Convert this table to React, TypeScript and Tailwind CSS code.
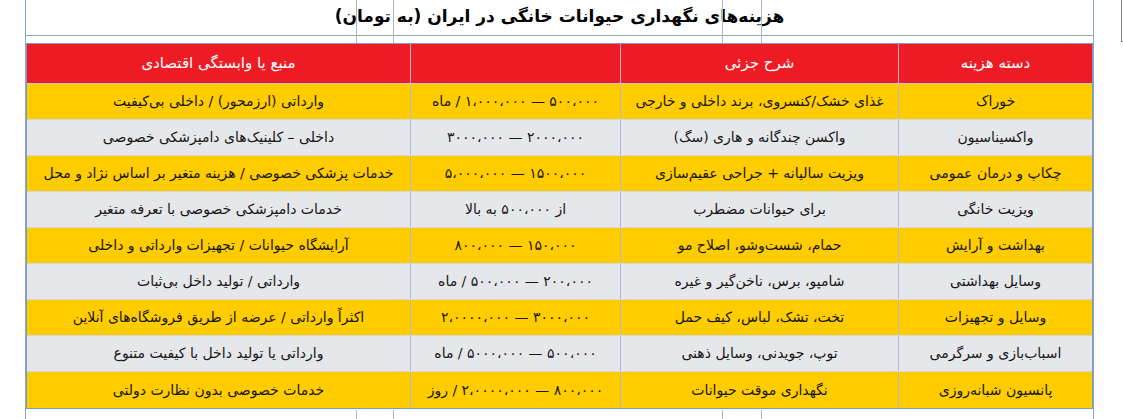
import React from "react";

type Row = { cat: string; desc: string; price: string; src: string };

const rows: Row[] = [
  { cat: "خوراک", desc: "غذای خشک/کنسروی، برند داخلی و خارجی", price: "۵۰۰،۰۰۰ — ۱،۰۰۰،۰۰۰ / ماه", src: "وارداتی (ارزمحور) / داخلی بی‌کیفیت" },
  { cat: "واکسیناسیون", desc: "واکسن چندگانه و هاری (سگ)", price: "۲۰۰۰،۰۰۰ — ۳۰۰۰،۰۰۰", src: "داخلی – کلینیک‌های دامپزشکی خصوصی" },
  { cat: "چکاپ و درمان عمومی", desc: "ویزیت سالیانه + جراحی عقیم‌سازی", price: "۱۵۰۰،۰۰۰ — ۵،۰۰۰،۰۰۰", src: "خدمات پزشکی خصوصی / هزینه متغیر بر اساس نژاد و محل" },
  { cat: "ویزیت خانگی", desc: "برای حیوانات مضطرب", price: "از ۵۰۰،۰۰۰ به بالا", src: "خدمات دامپزشکی خصوصی با تعرفه متغیر" },
  { cat: "بهداشت و آرایش", desc: "حمام، شست‌وشو، اصلاح مو", price: "۱۵۰،۰۰۰ — ۸۰۰،۰۰۰", src: "آرایشگاه حیوانات / تجهیزات وارداتی و داخلی" },
  { cat: "وسایل بهداشتی", desc: "شامپو، برس، ناخن‌گیر و غیره", price: "۲۰۰،۰۰۰ — ۵۰۰،۰۰۰ / ماه", src: "وارداتی / تولید داخل بی‌ثبات" },
  { cat: "وسایل و تجهیزات", desc: "تخت، تشک، لباس، کیف حمل", price: "۳۰۰۰،۰۰۰ — ۲،۰۰۰۰،۰۰۰", src: "اکثراً وارداتی / عرضه از طریق فروشگاه‌های آنلاین" },
  { cat: "اسباب‌بازی و سرگرمی", desc: "توپ، جویدنی، وسایل ذهنی", price: "۵۰۰،۰۰۰ — ۵۰۰۰،۰۰۰ / ماه", src: "وارداتی یا تولید داخل با کیفیت متنوع" },
  { cat: "پانسیون شبانه‌روزی", desc: "نگهداری موقت حیوانات", price: "۸۰۰،۰۰۰ — ۲،۰۰۰۰،۰۰۰ / روز", src: "خدمات خصوصی بدون نظارت دولتی" },
];

const grid = "grid grid-cols-[193px_278px_210px_1fr]";

export default function App() {
  return (
    <div
      className="relative w-[1123px] h-[419px] overflow-hidden bg-white text-[#161616]"
      style={{ fontFamily: '"DejaVu Sans", "Noto Sans", sans-serif' }}
    >
      <div className="ml-[25px] w-[1069px] h-full border-x border-[#8ba6c6] flex flex-col">
        <div
          dir="rtl"
          className="h-[36px] shrink-0 border-b border-[#8ba6c6] flex items-center justify-center font-bold text-[17px] text-black pb-[2px]"
        >
          هزینه‌های نگهداری حیوانات خانگی در ایران (به تومان)
        </div>
        <div className="h-[7px] shrink-0" />
        <div dir="rtl" className="border border-[#7b9bc3] shrink-0">
          <div className={`${grid} h-[40px] bg-[#ed1c24] text-white text-[15px] border-b border-[#c9ced6]`}>
            <div className="flex items-center justify-center">دسته هزینه</div>
            <div className="flex items-center justify-center border-r border-[#c5b2c2]">شرح جزئی</div>
            <div className="flex items-center justify-center border-r border-[#c5b2c2]"></div>
            <div className="flex items-center justify-center border-r border-[#c5b2c2]">منبع یا وابستگی اقتصادی</div>
          </div>
          {rows.map((r, i) => (
            <div
              key={i}
              className={`${grid} h-[36px] text-[14px] ${i % 2 === 0 ? "bg-[#ffcc00]" : "bg-[#e5e7eb]"} ${i < rows.length - 1 ? "border-b border-[#d3d6dc]" : ""}`}
            >
              <div className="flex items-center justify-center whitespace-nowrap">{r.cat}</div>
              <div className="flex items-center justify-center whitespace-nowrap border-r border-[#a9bcd8]">{r.desc}</div>
              <div className="flex items-center justify-center whitespace-nowrap border-r border-[#a9bcd8]">{r.price}</div>
              <div className="flex items-center justify-center whitespace-nowrap border-r border-[#a9bcd8]">{r.src}</div>
            </div>
          ))}
        </div>
      </div>

      {/* Word table gridlines (non-printing) */}
      <div className="pointer-events-none absolute left-[356px] top-0 h-[43px] w-px bg-[#a9b9cd]" />
      <div className="pointer-events-none absolute left-[393px] top-0 h-[43px] w-px bg-[#a9b9cd]" />
      <div className="pointer-events-none absolute left-[722px] top-0 h-[43px] w-px bg-[#a9b9cd]" />
      <div className="pointer-events-none absolute left-[761px] top-0 h-[43px] w-px bg-[#a9b9cd]" />
      <div className="pointer-events-none absolute left-[356px] top-[410px] h-[9px] w-px bg-[#a9b9cd]" />
      <div className="pointer-events-none absolute left-[393px] top-[410px] h-[9px] w-px bg-[#a9b9cd]" />
      <div className="pointer-events-none absolute left-[722px] top-[410px] h-[9px] w-px bg-[#a9b9cd]" />
      <div className="pointer-events-none absolute left-[761px] top-[410px] h-[9px] w-px bg-[#a9b9cd]" />

      {/* margin corner mark */}
      <div className="pointer-events-none absolute left-[1121px] top-0 h-[42px] w-[2px] border-l border-b border-[#8a8a8a]" />
    </div>
  );
}
